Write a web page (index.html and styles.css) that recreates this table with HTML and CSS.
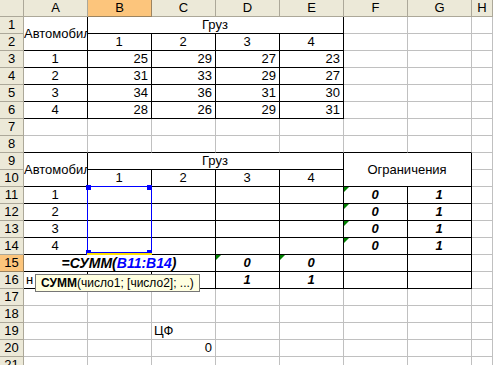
FILE: index.html
```html
<!doctype html>
<html lang="ru">
  <head>
    <meta charset="UTF-8" />
    <title>Книга1 - Транспортная задача</title>
    <link rel="stylesheet" href="styles.css">
  </head>
  <body>
    <div class="sheet">
      <!-- column headers -->
      <div class="corner"></div>
      <div class="ch">A</div>
      <div class="ch sel">B</div>
      <div class="ch">C</div>
      <div class="ch">D</div>
      <div class="ch">E</div>
      <div class="ch">F</div>
      <div class="ch">G</div>
      <div class="ch">H</div>

      <!-- rows 1-6: cost table -->
      <div class="rh">1</div>
      <div class="c bx rows2 clip">Автомобили</div>
      <div class="c bx cols4 ctr">Груз</div>
      <div class="c"></div><div class="c"></div><div class="c"></div>

      <div class="rh">2</div>
      <div class="c bx ctr">1</div>
      <div class="c bx ctr">2</div>
      <div class="c bx ctr">3</div>
      <div class="c bx ctr">4</div>
      <div class="c"></div><div class="c"></div><div class="c"></div>

      <div class="rh">3</div>
      <div class="c bx ctr">1</div>
      <div class="c bx num">25</div>
      <div class="c bx num">29</div>
      <div class="c bx num">27</div>
      <div class="c bx num">23</div>
      <div class="c"></div><div class="c"></div><div class="c"></div>

      <div class="rh">4</div>
      <div class="c bx ctr">2</div>
      <div class="c bx num">31</div>
      <div class="c bx num">33</div>
      <div class="c bx num">29</div>
      <div class="c bx num">27</div>
      <div class="c"></div><div class="c"></div><div class="c"></div>

      <div class="rh">5</div>
      <div class="c bx ctr">3</div>
      <div class="c bx num">34</div>
      <div class="c bx num">36</div>
      <div class="c bx num">31</div>
      <div class="c bx num">30</div>
      <div class="c"></div><div class="c"></div><div class="c"></div>

      <div class="rh">6</div>
      <div class="c bx ctr">4</div>
      <div class="c bx num">28</div>
      <div class="c bx num">26</div>
      <div class="c bx num">29</div>
      <div class="c bx num">31</div>
      <div class="c"></div><div class="c"></div><div class="c"></div>

      <div class="rh">7</div>
      <div class="c"></div><div class="c"></div><div class="c"></div><div class="c"></div>
      <div class="c"></div><div class="c"></div><div class="c"></div><div class="c"></div>

      <div class="rh">8</div>
      <div class="c bb"></div><div class="c bb"></div><div class="c bb"></div><div class="c bb"></div>
      <div class="c bb"></div><div class="c bb"></div><div class="c bb"></div><div class="c"></div>

      <!-- rows 9-16: plan table -->
      <div class="rh">9</div>
      <div class="c bx rows2 clip">Автомобили</div>
      <div class="c bx cols4 ctr">Груз</div>
      <div class="c bx cols2 rows2 mid">Ограничения</div>
      <div class="c"></div>

      <div class="rh">10</div>
      <div class="c bx ctr">1</div>
      <div class="c bx ctr">2</div>
      <div class="c bx ctr">3</div>
      <div class="c bx ctr">4</div>
      <div class="c"></div>

      <div class="rh">11</div>
      <div class="c bx ctr">1</div>
      <div class="c bx"></div><div class="c bx"></div><div class="c bx"></div><div class="c bx"></div>
      <div class="c bx ctr bi tri">0</div>
      <div class="c bx ctr bi">1</div>
      <div class="c"></div>

      <div class="rh">12</div>
      <div class="c bx ctr">2</div>
      <div class="c bx"></div><div class="c bx"></div><div class="c bx"></div><div class="c bx"></div>
      <div class="c bx ctr bi tri">0</div>
      <div class="c bx ctr bi">1</div>
      <div class="c"></div>

      <div class="rh">13</div>
      <div class="c bx ctr">3</div>
      <div class="c bx"></div><div class="c bx"></div><div class="c bx"></div><div class="c bx"></div>
      <div class="c bx ctr bi tri">0</div>
      <div class="c bx ctr bi">1</div>
      <div class="c"></div>

      <div class="rh">14</div>
      <div class="c bx ctr">4</div>
      <div class="c bx"></div><div class="c bx"></div><div class="c bx"></div><div class="c bx"></div>
      <div class="c bx ctr bi tri">0</div>
      <div class="c bx ctr bi">1</div>
      <div class="c"></div>

      <div class="rh sel">15</div>
      <div class="c bx cols3 editor"><span class="fx">=СУММ(<span class="fx-ref">B11:B14</span>)</span></div>
      <div class="c bx ctr bi tri">0</div>
      <div class="c bx ctr bi tri">0</div>
      <div class="c bx"></div>
      <div class="c bx"></div>
      <div class="c"></div>

      <div class="rh">16</div>
      <div class="c bx">н</div>
      <div class="c bx"></div>
      <div class="c bx"></div>
      <div class="c bx ctr bi">1</div>
      <div class="c bx ctr bi">1</div>
      <div class="c bx"></div>
      <div class="c bx"></div>
      <div class="c"></div>

      <div class="rh">17</div>
      <div class="c"></div><div class="c"></div><div class="c"></div><div class="c"></div>
      <div class="c"></div><div class="c"></div><div class="c"></div><div class="c"></div>

      <div class="rh">18</div>
      <div class="c"></div><div class="c"></div><div class="c"></div><div class="c"></div>
      <div class="c"></div><div class="c"></div><div class="c"></div><div class="c"></div>

      <div class="rh">19</div>
      <div class="c"></div><div class="c"></div>
      <div class="c">ЦФ</div>
      <div class="c"></div><div class="c"></div><div class="c"></div><div class="c"></div><div class="c"></div>

      <div class="rh">20</div>
      <div class="c"></div><div class="c"></div>
      <div class="c num">0</div>
      <div class="c"></div><div class="c"></div><div class="c"></div><div class="c"></div><div class="c"></div>

      <div class="rh">21</div>
      <div class="c"></div><div class="c"></div><div class="c"></div><div class="c"></div>
      <div class="c"></div><div class="c"></div><div class="c"></div><div class="c"></div>

      <!-- range highlight for B11:B14 while the formula is typed -->
      <div class="ref-range">
        <span class="handle tl"></span>
        <span class="handle tr"></span>
        <span class="handle bl"></span>
        <span class="handle br"></span>
        <span class="ref-bar"></span>
      </div>

      <!-- function argument tip -->
      <div class="tip"><b>СУММ</b>(число1; [число2]; ...)</div>
    </div>
  </body>
</html>
```

FILE: styles.css
```css
:root {
  --grid-line: #c0c0c0;
  --header-bg: #ece9d8;
  --header-line: #aca899;
  --selected-bg: #fcc57c;
  --border: #000000;
  --ref-color: #0000ff;
}

body {
  margin: 0;
  background: #ffffff;
  overflow: hidden;
  font-family: "Liberation Sans", Arial, sans-serif;
  font-size: 13px;
  color: #000000;
}

.sheet {
  position: relative;
  display: grid;
  grid-template-columns: 24px repeat(7, 64px) 1fr;
  grid-auto-rows: 17px;
  width: 493px;
  height: 365px;
  overflow: hidden;
}

.sheet > div {
  box-sizing: border-box;
  line-height: 16px;
  white-space: nowrap;
}

/* headers */
.corner,
.ch,
.rh {
  background: var(--header-bg);
  border-right: 1px solid var(--header-line);
  border-bottom: 1px solid var(--header-line);
  text-align: center;
}

.sel {
  background: var(--selected-bg);
  border-right-color: #9c8460;
  border-bottom-color: #9c8460;
}

/* cells */
.c {
  position: relative;
  padding: 0 3px 0 2px;
  border-right: 1px solid var(--grid-line);
  border-bottom: 1px solid var(--grid-line);
  overflow: hidden;
}

.bx {
  border-right-color: var(--border);
  border-bottom-color: var(--border);
}

.bb {
  border-bottom-color: var(--border);
}

.ctr {
  text-align: center;
}

.num {
  text-align: right;
}

.bi {
  font-weight: bold;
  font-style: italic;
}

.cols2 {
  grid-column: span 2;
}

.cols3 {
  grid-column: span 3;
}

.cols4 {
  grid-column: span 4;
}

.rows2 {
  grid-row: span 2;
  display: flex;
  align-items: center;
}

.mid {
  justify-content: center;
}

.clip {
  padding: 0;
}

/* green error marker in the corner */
.tri::before {
  content: "";
  position: absolute;
  top: 0;
  left: 0;
  border-top: 5px solid #008000;
  border-right: 5px solid transparent;
}

/* cell being edited */
.editor {
  text-align: center;
  overflow: visible;
}

.fx {
  font-size: 14px;
  font-weight: bold;
  font-style: italic;
}

.fx-ref {
  color: var(--ref-color);
}

.ref-range {
  position: absolute;
  grid-column: 3 / 4;
  grid-row: 12 / 16;
  inset: -1px 0 2px -1px;
  border: 1px solid var(--ref-color);
}

.handle {
  position: absolute;
  width: 5px;
  height: 5px;
  background: var(--ref-color);
}

.handle.tl { top: -2px; left: -2px; }
.handle.tr { top: -2px; right: -1px; }
.handle.bl { bottom: -3px; left: -2px; }
.handle.br { bottom: -3px; right: -1px; }

.ref-bar {
  position: absolute;
  left: -1px;
  right: -1px;
  bottom: -3px;
  height: 2px;
  background: #ffe100;
}

.tip {
  position: absolute;
  grid-column: 2 / 5;
  grid-row: 17 / 18;
  margin: 2px 0 0 11px;
  justify-self: start;
  align-self: start;
  padding: 0 5px;
  font-size: 12px;
  line-height: 17px;
  background: #ffffe1;
  border: 1px solid #767676;
}
```
